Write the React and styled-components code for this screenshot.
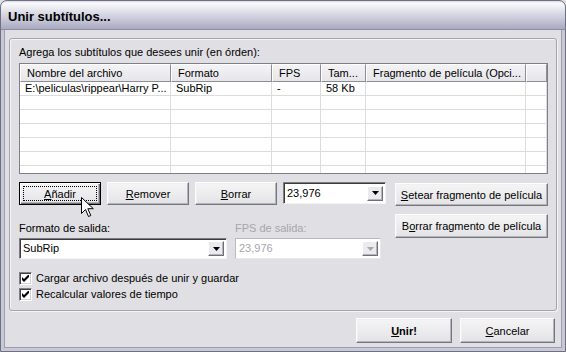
import React from "react";
import styled, { createGlobalStyle, css } from "styled-components";

const Global = createGlobalStyle`
  html, body { margin: 0; padding: 0; background: #e0dfe3; }
  body { width: 566px; height: 352px; overflow: hidden; font-family: "Liberation Sans", Arial, sans-serif; font-size: 11px; color: #000; }
`;

const Window = styled.div`
  position: relative;
  width: 566px;
  height: 352px;
  box-sizing: border-box;
  border: 1px solid #6f6f84;
  border-radius: 7px 7px 0 0;
  background: #c9c9d6;
  padding: 0 3px 3px;
  display: flex;
  flex-direction: column;
  overflow: hidden;
`;

const TitleBar = styled.div`
  height: 28px;
  margin: 0 -3px;
  padding: 0 7px;
  display: flex;
  align-items: center;
  border-radius: 6px 6px 0 0;
  background: linear-gradient(to bottom, #d6d6e2 0px, #fbfbfd 2px, #eeeef4 6px, #d8d8e4 13px, #c3c3d5 20px, #a9a9c0 28px);
  border-bottom: 1px solid #8c8ca4;
`;

const Title = styled.span`
  font-family: "Liberation Sans", Arial, sans-serif;
  font-weight: bold;
  font-size: 13px;
  color: #000;
  padding-top: 2px;
`;

const Body = styled.div`
  flex: 1;
  background: #e0dfe3;
  border: 1px solid #9d9db0;
  border-top: none;
  padding: 8px 4px 0 4px;
  display: flex;
  flex-direction: column;
`;

const GroupBox = styled.div`
  border: 1px solid #a4a4ac;
  border-radius: 3px;
  box-shadow: 1px 1px 0 #f4f4f6, inset 1px 1px 0 #f4f4f6;
  padding: 7px 8px 9px 9px;
  display: flex;
  flex-direction: column;
`;

const Caption = styled.div`
  height: 13px;
  line-height: 13px;
  margin-bottom: 4px;
`;

const ListView = styled.div`
  height: 111px;
  box-sizing: border-box;
  border: 1px solid #7f7f87;
  background: #fff;
  overflow: hidden;
`;

const cols = "151px 101px 49px 45px 160px 1fr";

const HeaderRow = styled.div`
  display: grid;
  grid-template-columns: ${cols};
  height: 18px;
`;

const HeaderCell = styled.div`
  box-sizing: border-box;
  height: 18px;
  line-height: 16px;
  padding-left: 6px;
  background: linear-gradient(#f3f3f5, #e6e5e9);
  border-top: 1px solid #fff;
  border-left: 1px solid #fff;
  border-right: 1px solid #8d8d95;
  border-bottom: 1px solid #8d8d95;
  white-space: nowrap;
  overflow: hidden;
`;

const Row = styled.div`
  display: grid;
  grid-template-columns: ${cols};
  height: 14px;
`;

const Cell = styled.div`
  box-sizing: border-box;
  height: 14px;
  line-height: 13px;
  padding-left: 5px;
  border-right: 1px solid #dcdcdc;
  border-bottom: 1px solid #dcdcdc;
  white-space: nowrap;
  overflow: hidden;
`;

const Controls = styled.div`
  margin-top: 8px;
  display: flex;
  justify-content: space-between;
`;

const LeftCol = styled.div`
  display: flex;
  flex-direction: column;
`;

const ButtonRow = styled.div`
  display: grid;
  grid-template-columns: 82px 82px 82px 103px;
  column-gap: 6px;
  height: 23px;
`;

const Button = styled.button`
  box-sizing: border-box;
  width: ${(p) => p.$w || "auto"};
  height: ${(p) => p.$h || "23px"};
  margin: 0;
  padding: 0;
  font-family: "Liberation Sans", Arial, sans-serif;
  font-size: 11px;
  font-weight: ${(p) => (p.$bold ? "bold" : "normal")};
  color: #000;
  background: linear-gradient(#f5f5f6, #ebebed 60%, #e3e3e6);
  border: 1px solid;
  border-color: #fdfdfd #76767e #76767e #fdfdfd;
  box-shadow: inset -1px -1px 0 #b4b4bc, inset 1px 1px 0 #f0f0f2;
  position: relative;
  ${(p) =>
    p.$default &&
    css`
      border: 1px solid #000;
      box-shadow: inset 1px 1px 0 #fff, inset -1px -1px 0 #6f6f77, inset -2px -2px 0 #b4b4bc;
    `}
`;

const FocusRing = styled.span`
  position: absolute;
  inset: 3px;
  border: 1px dotted #000;
  pointer-events: none;
`;

const U = styled.span`
  text-decoration: underline;
  text-underline-offset: 1px;
`;

const OutputRow = styled.div`
  margin-top: 17px;
  display: flex;
  gap: 8px;
`;

const Field = styled.div`
  display: flex;
  flex-direction: column;
  gap: 3px;
  width: ${(p) => p.$w};
`;

const Label = styled.div`
  height: 13px;
  line-height: 13px;
  color: ${(p) => (p.$disabled ? "#a6a6ad" : "#000")};
`;

const Combo = styled.div`
  box-sizing: border-box;
  width: ${(p) => p.$w || "100%"};
  height: ${(p) => p.$h || "21px"};
  display: flex;
  align-items: center;
  background: #fff;
  border: 1px solid;
  border-color: ${(p) => (p.$disabled ? "#b9b9bf #e8e8ea #e8e8ea #b9b9bf" : "#7c7c84 #f4f4f6 #f4f4f6 #7c7c84")};
  box-shadow: ${(p) => (p.$disabled ? "none" : "inset 1px 1px 0 #3c3c40")};
  padding: 2px 2px 2px 3px;
`;

const ComboText = styled.span`
  flex: 1;
  line-height: 13px;
  color: ${(p) => (p.$disabled ? "#a6a6ad" : "#000")};
`;

const DropBtn = styled.span`
  box-sizing: border-box;
  width: 16px;
  height: 15px;
  display: flex;
  align-items: center;
  justify-content: center;
  background: #ebebed;
  border: 1px solid;
  border-color: #fff #6f6f77 #6f6f77 #fff;
  box-shadow: inset -1px -1px 0 #b4b4bc;
`;

const Arrow = ({ disabled }) => (
  <svg width="7" height="4" viewBox="0 0 7 4">
    <path d="M0 0h7L3.5 4z" fill={disabled ? "#a6a6ad" : "#000"} />
  </svg>
);

const Checks = styled.div`
  margin-top: 13px;
  display: flex;
  flex-direction: column;
  gap: 3px;
`;

const CheckRow = styled.label`
  display: flex;
  align-items: center;
  gap: 4px;
  height: 13px;
  line-height: 13px;
`;

const Box = styled.span`
  box-sizing: border-box;
  width: 13px;
  height: 13px;
  background: #fff;
  border: 1px solid;
  border-color: #808088 #fff #fff #808088;
  box-shadow: inset 1px 1px 0 #404044, inset -1px -1px 0 #d4d4d8;
  display: flex;
  align-items: center;
  justify-content: center;
`;

const Check = () => (
  <svg width="7" height="7" viewBox="0 0 7 7">
    <path d="M0 2v3l2 2 5-5V-1L2 4z" fill="#000" />
  </svg>
);

const RightCol = styled.div`
  display: flex;
  flex-direction: column;
  gap: 8px;
  padding-top: 1px;
`;

const Footer = styled.div`
  margin-top: 7px;
  padding-right: 2px;
  display: flex;
  justify-content: flex-end;
  gap: 8px;
`;

const Cursor = styled.svg`
  position: absolute;
  left: 80px;
  top: 196px;
`;

const headers = ["Nombre del archivo", "Formato", "FPS", "Tam...", "Fragmento de película (Opci...", ""];
const rows = [
  ["E:\\peliculas\\rippear\\Harry P...", "SubRip", "-", "58 Kb", "", ""],
  ["", "", "", "", "", ""],
  ["", "", "", "", "", ""],
  ["", "", "", "", "", ""],
  ["", "", "", "", "", ""],
  ["", "", "", "", "", ""],
  ["", "", "", "", "", ""],
];

export default function App() {
  return (
    <>
      <Global />
      <Window>
        <TitleBar>
          <Title>Unir subtítulos...</Title>
        </TitleBar>
        <Body>
          <GroupBox>
            <Caption>Agrega los subtítulos que desees unir (en órden):</Caption>
            <ListView>
              <HeaderRow>
                {headers.map((h, i) => (
                  <HeaderCell key={i}>{h}</HeaderCell>
                ))}
              </HeaderRow>
              {rows.map((r, i) => (
                <Row key={i}>
                  {r.map((c, j) => (
                    <Cell key={j}>{c}</Cell>
                  ))}
                </Row>
              ))}
            </ListView>
            <Controls>
              <LeftCol>
                <ButtonRow>
                  <Button $default>
                    <FocusRing />
                    <U>A</U>ñadir
                  </Button>
                  <Button>
                    <U>R</U>emover
                  </Button>
                  <Button>
                    <U>B</U>orrar
                  </Button>
                  <Combo $h="22px">
                    <ComboText>23,976</ComboText>
                    <DropBtn>
                      <Arrow />
                    </DropBtn>
                  </Combo>
                </ButtonRow>
                <OutputRow>
                  <Field $w="208px">
                    <Label>Formato de salida:</Label>
                    <Combo>
                      <ComboText>SubRip</ComboText>
                      <DropBtn>
                        <Arrow />
                      </DropBtn>
                    </Combo>
                  </Field>
                  <Field $w="146px">
                    <Label $disabled>FPS de salida:</Label>
                    <Combo $disabled>
                      <ComboText $disabled>23,976</ComboText>
                      <DropBtn>
                        <Arrow disabled />
                      </DropBtn>
                    </Combo>
                  </Field>
                </OutputRow>
                <Checks>
                  <CheckRow>
                    <Box>
                      <Check />
                    </Box>
                    Cargar archivo después de unir y guardar
                  </CheckRow>
                  <CheckRow>
                    <Box>
                      <Check />
                    </Box>
                    Recalcular valores de tiempo
                  </CheckRow>
                </Checks>
              </LeftCol>
              <RightCol>
                <Button $w="153px">
                  <U>S</U>etear fragmento de película
                </Button>
                <Button $w="153px" $h="24px">
                  B<U>o</U>rrar fragmento de película
                </Button>
              </RightCol>
            </Controls>
          </GroupBox>
          <Footer>
            <Button $w="96px" $h="25px" $bold>
              <U>U</U>nir!
            </Button>
            <Button $w="95px" $h="25px">
              <U>C</U>ancelar
            </Button>
          </Footer>
        </Body>
        <Cursor width="13" height="21" viewBox="0 0 13 21">
          <path d="M0.5 0.5v16l4-4 3 7 2.3-1-3-6.8h5.5z" fill="#fff" stroke="#000" strokeWidth="1" strokeLinejoin="miter" />
        </Cursor>
      </Window>
    </>
  );
}
